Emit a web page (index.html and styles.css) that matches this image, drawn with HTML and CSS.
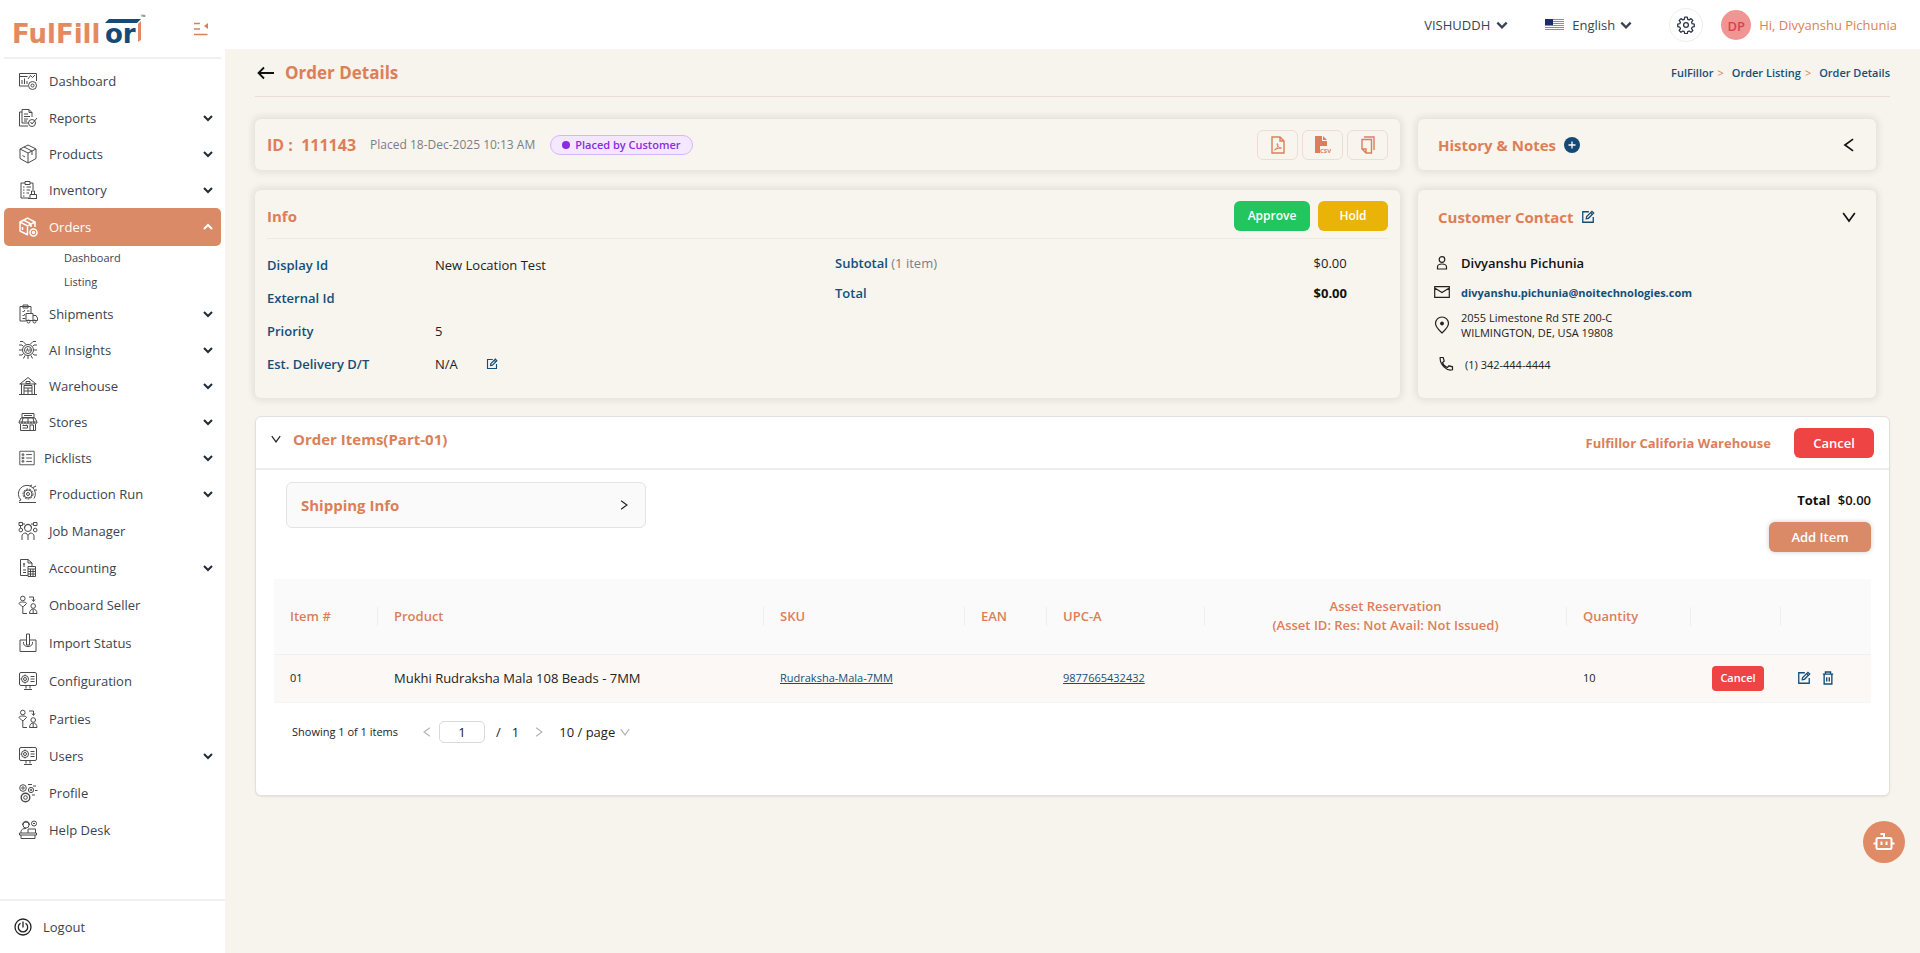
FILE: index.html
```html
<!DOCTYPE html>
<html lang="en">
<head>
<meta charset="utf-8">
<title>Order Details - FulFillor</title>
<link rel="stylesheet" href="styles.css">
</head>
<body>
<svg class="sprite" aria-hidden="true">
  <symbol id="chev" viewBox="0 0 12 12"><path d="M2 4l4 4 4-4" fill="none" stroke="currentColor" stroke-width="2"/></symbol>
  <symbol id="chev-thin" viewBox="0 0 12 12"><path d="M1 2.500l5 7 5-7" fill="none" stroke="currentColor" stroke-width="1.400"/></symbol>
  <symbol id="edit" viewBox="0 0 16 16"><g fill="none" stroke="currentColor" stroke-width="1.500"><path d="M9 2H2v12h12V8"/><path d="M6 10l.5-2.500L12.500 1.500 14.500 3.500 8.500 9.500z"/><path d="M11 3l2 2"/></g></symbol>
  <symbol id="i-dash" viewBox="0 0 20 20"><path d="M10 15H1.500V2.500h17V10M1.500 5.500h8M4 13V9M6.500 13V7.500M9 13v-3M10 8l2.500-3.500 2 2L17 4"/><circle cx="14.500" cy="14.500" r="4"/><circle cx="14.500" cy="14.500" r="1.500"/></symbol>
  <symbol id="i-report" viewBox="0 0 20 20"><path d="M4 1.500h7l3 3V9M11 1.500v3h3M4 1.500V15h6M4 4H1.500v14H10M6 6h4M6 8.500h6M6 11h4M6 13h3"/><circle cx="14" cy="15" r="3.500"/><path d="M12.500 14l1.500 2 5-6"/></symbol>
  <symbol id="i-box" viewBox="0 0 20 20"><path d="M10 1l8 4v9.500L10 19l-8-4.500V5zM2 5l8 4 8-4M10 9v10M6 3l8 4v4M4.500 11.500l2.500 1.500"/></symbol>
  <symbol id="i-inv" viewBox="0 0 20 20"><path d="M7 3H3v15h8M12 3h3v7M7 1.500h5v3H7zM5 7h1.500M8.500 7H13M5 10h1.500M8.500 10H12M5 13h1.500M8.500 13H11M5 16h1.500M12 18.500v-4h6.500v4zM13.500 14.500v-3.500h3v3.500M10 18.500h9"/></symbol>
  <symbol id="i-order" viewBox="0 0 20 20"><path d="M10 18l-8-4V5l7.500-4L17 5v5M2 5l7.500 4L17 5M9.500 9v8M5.500 3l7.500 4v3M4.500 10v3"/><circle cx="15.500" cy="15.500" r="3.500"/><circle cx="15.500" cy="15.500" r="1"/></symbol>
  <symbol id="i-ship" viewBox="0 0 20 20"><path d="M8 17H2V2.500h11V9M5 1h5v3H5zM4.500 7l1 1 1.500-2M9 7h2.500M4.500 11l1 1 1.500-2M4.500 14.500h3M8 9.500h7v7H8zM15 11.500h3l1.500 2.500v2.500H15"/><circle cx="10.500" cy="17.500" r="1.500"/><circle cx="16.500" cy="17.500" r="1.500"/></symbol>
  <symbol id="i-ai" viewBox="0 0 20 20"><circle cx="10" cy="10" r="5.500"/><circle cx="10" cy="10" r="3.500"/><path d="M8.500 11.500L9.500 8.500l1 3M12 8.500v3M1 5h3l1.500 1.500M1 10h3M1 15h3l1.500-1.500M19 5h-3l-1.500 1.500M19 10h-3M19 15h-3l-1.500-1.500M2 1.500h3l3 3M18 1.500h-3l-3 3M7 15.500l-1.500 3M13 15.500l1.500 3M10 16v3"/></symbol>
  <symbol id="i-ware" viewBox="0 0 20 20"><path d="M2 8l8-6.500L18 8M3.500 7.500V18M16.500 7.500V18M1 18.500h18M6 18V9.500h8V18M6 12h8M6 15h8M8 5.500h4v2H8zM1.500 8h17M10 12v6"/></symbol>
  <symbol id="i-store" viewBox="0 0 20 20"><path d="M4 1.500h12v4H4zM6 3.500h8M3 6h14l2 4H1zM1 10c0 2.500 3 2.500 3 0 0 2.500 3 2.500 3 0 0 2.500 3 2.500 3 0 0 2.500 3 2.500 3 0 0 2.500 3 2.500 3 0 0 2.500 3 2.500 3 0M2.500 12v6.500h15V12M12 18.500V13h3.500v5.500M4.500 13.500h5V16h-5M5 6L4 10M10 6v4M15 6l1 4"/></symbol>
  <symbol id="i-pick" viewBox="0 0 20 20"><path d="M2 2.500h16v15H2zM4.500 5.500h2v1.500h-2zM9 6.200h6.500M4.500 9.200h2v1.500h-2zM9 10h6.500M4.500 13h2v1.500h-2zM9 13.800h6.500"/></symbol>
  <symbol id="i-prod" viewBox="0 0 20 20"><path d="M3 16a8.500 8.500 0 1 1 13-1.500M1 18.500h17M12 2l2-1M15 3.500L18 2M17 6h2M3 16l-2 1"/><circle cx="10" cy="10" r="5" stroke-dasharray="2 1"/><circle cx="10" cy="10" r="4"/><circle cx="10" cy="10" r="1.500"/></symbol>
  <symbol id="i-job" viewBox="0 0 20 20"><circle cx="10" cy="7" r="3.500"/><path d="M4 19v-4c0-2 2-3 4-3l2 2.500L12 12c2 0 4 1 4 3v4M10 14.500V19M6.500 7c0-5 7-5 7 0M1 1.500h3.500v3H1zM15.500 1.500H19v3h-3.500zM4.500 3H7M13 3h2.500M2.500 4.500V7"/><circle cx="2.800" cy="9" r="1.800"/><circle cx="17.200" cy="9" r="1.800"/></symbol>
  <symbol id="i-acc" viewBox="0 0 20 20"><path d="M10 17.500H2.500v-16H10L14 5v3M10 1.500V5h4M6 5v4M5 6h2M5 12h3M5 14.500h3M10 8.500h7.500v10H10zM10 11h7.500M12.500 11v7.500M15 11v7.500M10 13.500h7.500M10 16h7.500"/></symbol>
  <symbol id="i-party" viewBox="0 0 20 20"><circle cx="4.800" cy="3.500" r="2.300"/><path d="M1 8.500c0-2 7.500-2 7.500 0L5.500 11.500h-1.500zM4.800 11.500V18.500H9M11 2h4.500v4M14 4.500L15.500 6.500 17 4.500"/><circle cx="15.200" cy="11" r="2.300"/><path d="M11.500 18.500c0-6 7.500-6 7.500 0zM15.200 14.500v4"/></symbol>
  <symbol id="i-import" viewBox="0 0 20 20"><path d="M8 7H2v11.500h16V7h-6M8.500 12V1h3v11M5.500 9c-1 6 10 6 9 0M8.500 12h3"/></symbol>
  <symbol id="i-config" viewBox="0 0 20 20"><rect x="1.500" y="1.500" width="17" height="13" rx="1.500"/><circle cx="7" cy="8" r="3.500"/><circle cx="7" cy="8" r="1.500"/><path d="M12.500 5.500h4M12.500 8h4M12.500 10.500h4M8 14.500v3M12 14.500v3M6 18.500h8M7 3.500v1M3 8h-.5M7 11.500v1"/></symbol>
  <symbol id="i-gears" viewBox="0 0 20 20"><circle cx="5" cy="5" r="3.300"/><circle cx="5" cy="5" r="1.200"/><circle cx="13" cy="7" r="2.600"/><circle cx="13" cy="7" r=".8"/><circle cx="7.500" cy="14.500" r="4.300" stroke-width="1.400"/><circle cx="7.500" cy="14.500" r="1.800"/><path d="M10 1.500h4M15 3h3M17 7.500h2.500M14 12h3"/></symbol>
  <symbol id="i-help" viewBox="0 0 20 20"><circle cx="8" cy="5" r="3"/><path d="M4.500 5c0-5 7-5 7 0M3 13V11.500c0-2 2-3 5-3M10 13V9h7.500v4M1.500 13h17v2h-17zM3 15v3.500h14V15"/><circle cx="16" cy="3.500" r="2.500"/><path d="M15 3.500h2"/></symbol>
</svg>

<div class="app">
  <aside class="sidebar">
    <div class="brand">
      <svg class="logo" viewBox="0 0 132 34" role="img" aria-label="FulFillor">
        <text x="-2" y="31" class="logo-a">FulFill</text>
        <text x="91" y="31" class="logo-b">or</text>
        <path d="M95 7h32l-4 4H91z" fill="#144a75"/>
        <path d="M124 12l3-3v19l-3 2z" fill="#e58a60"/>
        <text x="127" y="7" class="logo-tm">™</text>
      </svg>
      <button class="bare collapse" aria-label="Collapse menu"><svg width="16" height="14" viewBox="0 0 16 14"><g fill="none" stroke="#dc7f58" stroke-width="1.500"><path d="M1 1.500h6M1 7h6M1 12.500h13.500"/></g><path d="M15 1v6l-4-3z" fill="#dc7f58"/></svg></button>
    </div>
    <nav class="nav">
      <a class="item leaf" href="#"><svg class="ic"><use href="#i-dash"/></svg><span>Dashboard</span></a>
      <a class="item" href="#"><svg class="ic"><use href="#i-report"/></svg><span>Reports</span><svg class="cv"><use href="#chev"/></svg></a>
      <a class="item" href="#"><svg class="ic"><use href="#i-box"/></svg><span>Products</span><svg class="cv"><use href="#chev"/></svg></a>
      <a class="item" href="#"><svg class="ic"><use href="#i-inv"/></svg><span>Inventory</span><svg class="cv"><use href="#chev"/></svg></a>
      <a class="item leaf active" href="#"><svg class="ic"><use href="#i-order"/></svg><span>Orders</span><svg class="cv up"><use href="#chev"/></svg></a>
      <div class="sub"><a href="#">Dashboard</a><a href="#">Listing</a></div>
      <a class="item" href="#"><svg class="ic"><use href="#i-ship"/></svg><span>Shipments</span><svg class="cv"><use href="#chev"/></svg></a>
      <a class="item" href="#"><svg class="ic"><use href="#i-ai"/></svg><span>AI Insights</span><svg class="cv"><use href="#chev"/></svg></a>
      <a class="item" href="#"><svg class="ic"><use href="#i-ware"/></svg><span>Warehouse</span><svg class="cv"><use href="#chev"/></svg></a>
      <a class="item" href="#"><svg class="ic"><use href="#i-store"/></svg><span>Stores</span><svg class="cv"><use href="#chev"/></svg></a>
      <a class="item compact" href="#"><svg class="ic"><use href="#i-pick"/></svg><span>Picklists</span><svg class="cv"><use href="#chev"/></svg></a>
      <a class="item" href="#"><svg class="ic"><use href="#i-prod"/></svg><span>Production Run</span><svg class="cv"><use href="#chev"/></svg></a>
      <a class="item leaf" href="#"><svg class="ic"><use href="#i-job"/></svg><span>Job Manager</span></a>
      <a class="item" href="#"><svg class="ic"><use href="#i-acc"/></svg><span>Accounting</span><svg class="cv"><use href="#chev"/></svg></a>
      <a class="item leaf" href="#"><svg class="ic"><use href="#i-party"/></svg><span>Onboard Seller</span></a>
      <a class="item leaf" href="#"><svg class="ic"><use href="#i-import"/></svg><span>Import Status</span></a>
      <a class="item leaf" href="#"><svg class="ic"><use href="#i-config"/></svg><span>Configuration</span></a>
      <a class="item leaf" href="#"><svg class="ic"><use href="#i-party"/></svg><span>Parties</span></a>
      <a class="item" href="#"><svg class="ic"><use href="#i-config"/></svg><span>Users</span><svg class="cv"><use href="#chev"/></svg></a>
      <a class="item leaf" href="#"><svg class="ic"><use href="#i-gears"/></svg><span>Profile</span></a>
      <a class="item" href="#"><svg class="ic"><use href="#i-help"/></svg><span>Help Desk</span></a>
    </nav>
    <a class="logout" href="#"><svg width="18" height="18" viewBox="0 0 18 18" fill="none" stroke="#222" stroke-width="1.300"><circle cx="9" cy="9" r="8"/><path d="M6.500 5.200a4.700 4.700 0 1 0 5 0M9 3.500v6"/></svg><span>Logout</span></a>
  </aside>

  <div class="page">
    <header class="topbar">
      <label class="pick tenant"><select aria-label="Tenant"><option>VISHUDDH</option></select><svg class="tcv"><use href="#chev"/></svg></label>
      <label class="pick lang">
        <svg class="flag" width="19" height="12" viewBox="0 0 19 12"><rect width="19" height="12" fill="#fff"/><path d="M0 .5h19M0 2.500h19M0 4.500h19M0 6.500h19M0 8.500h19M0 10.500h19" stroke="#e06a72"/><rect width="8" height="6" fill="#1d2a6b"/></svg>
        <select aria-label="Language"><option>English</option></select><svg class="tcv"><use href="#chev"/></svg></label>
      <button class="gear" aria-label="Settings"><svg width="18" height="18" viewBox="0 0 24 24" fill="none" stroke="#2b3447" stroke-width="1.700" stroke-linejoin="round"><circle cx="12" cy="12" r="3.200"/><path d="M10.300 1.500h3.400l.6 2.900 1.900.8 2.500-1.700 2.400 2.400-1.700 2.500.8 1.900 2.800.6v3.400l-2.800.6-.8 1.900 1.700 2.500-2.400 2.400-2.500-1.700-1.900.8-.6 2.700h-3.400l-.6-2.700-1.900-.8-2.500 1.700-2.400-2.400 1.700-2.500-.8-1.900-2.800-.6v-3.400l2.800-.6.800-1.900-1.700-2.500 2.400-2.400 2.500 1.700 1.900-.8z"/></svg></button>
      <a class="user" href="#"><span class="avatar">DP</span><span>Hi, Divyanshu Pichunia</span></a>
    </header>

    <main class="main">
      <div class="titlebar">
        <button class="bare" aria-label="Back"><svg width="18" height="14" viewBox="0 0 18 14" fill="none" stroke="#111" stroke-width="1.800"><path d="M7 1.500L1.500 7 7 12.500M1.500 7H17"/></svg></button>
        <h1>Order Details</h1>
        <nav class="crumbs"><a href="#">FulFillor</a><i>&gt;</i><a href="#">Order Listing</a><i>&gt;</i><a href="#">Order Details</a></nav>
      </div>

      <div class="grid">
        <section class="card idcard">
          <h2>ID : &nbsp;111143</h2>
          <span class="placed">Placed 18-Dec-2025 10:13 AM</span>
          <span class="badge">Placed by Customer</span>
          <div class="tools">
            <button aria-label="Download PDF"><svg width="14" height="18" viewBox="0 0 14 18" fill="none" stroke="currentColor" stroke-width="1.400"><path d="M1 1h8l4 4v12H1zM9 1v4h4"/><path d="M3.500 14c3-2 4-5 3-6.500-1.500 1 1.500 5 4 4.500-2 0-5 .5-7 2z" stroke-width="1"/></svg></button>
            <button aria-label="Download CSV"><svg width="18" height="18" viewBox="0 0 18 18"><path d="M1 0h7v5h5v5H6v7H1z" fill="currentColor"/><path d="M9 0l4 4H9z" fill="currentColor"/><text x="6" y="17" class="csv">CSV</text></svg></button>
            <button aria-label="Copy order"><svg width="14" height="18" viewBox="0 0 14 18" fill="none" stroke="currentColor" stroke-width="1.400"><path d="M1 3.500h9.500V17H5l-4-4zM1 13h4v4M3 1h10v13"/></svg></button>
          </div>
        </section>

        <section class="card history">
          <h3>History &amp; Notes</h3>
          <button class="bare" aria-label="Add note"><svg width="16" height="16" viewBox="0 0 16 16"><circle cx="8" cy="8" r="8" fill="#144a75"/><path d="M8 4.500v7M4.500 8h7" stroke="#fff" stroke-width="1.300"/></svg></button>
          <button class="bare end" aria-label="Expand history"><svg class="fold left"><use href="#chev-thin"/></svg></button>
        </section>

        <section class="card info">
          <div class="info-head"><h3>Info</h3><button class="btn ok">Approve</button><button class="btn hold">Hold</button></div>
          <div class="info-body">
            <dl class="facts">
              <dt>Display Id</dt><dd>New Location Test</dd>
              <dt>External Id</dt><dd></dd>
              <dt>Priority</dt><dd>5</dd>
              <dt>Est. Delivery D/T</dt><dd>N/A <button class="bare" aria-label="Edit delivery date"><svg width="12" height="12"><use href="#edit"/></svg></button></dd>
            </dl>
            <dl class="sums">
              <dt>Subtotal <span>(1 item)</span></dt><dd>$0.00</dd>
              <dt>Total</dt><dd class="strong">$0.00</dd>
            </dl>
          </div>
        </section>

        <section class="card contact">
          <div class="contact-head"><h3>Customer Contact</h3>
            <button class="bare" aria-label="Edit contact"><svg width="14" height="14"><use href="#edit"/></svg></button>
            <button class="bare end" aria-label="Collapse contact"><svg class="fold"><use href="#chev-thin"/></svg></button></div>
          <ul class="lines">
            <li class="who"><svg width="16" height="16" viewBox="0 0 16 16"><circle cx="8" cy="4.500" r="2.800"/><path d="M3.500 14v-2c0-4 9-4 9 0v2z"/></svg><span>Divyanshu Pichunia</span></li>
            <li class="mail"><svg width="16" height="12" viewBox="0 0 16 12"><path d="M.7.700h14.600v10.600H.7zM.7 2L8 6.500 15.300 2"/></svg><a href="#">divyanshu.pichunia@noitechnologies.com</a></li>
            <li class="addr"><svg width="16" height="18" viewBox="0 0 16 18"><path d="M8 17c-3-3-6.500-6-6.500-9.500a6.500 6.500 0 0 1 13 0C14.500 11 11 14 8 17z"/><circle cx="8" cy="7.500" r="1.300" fill="#222"/></svg><span>2055 Limestone Rd STE 200-C<br>WILMINGTON, DE, USA 19808</span></li>
            <li class="tel"><svg width="16" height="16" viewBox="0 0 16 16"><path d="M2.200 1.500h3l1 3.500-1.700 1.600c.8 2.300 2.600 4.100 4.900 4.900L11 9.800l3.500 1v3c-5 2-13-5-12.300-12.300z"/></svg><span>(1) 342-444-4444</span></li>
          </ul>
        </section>
      </div>

      <section class="items">
        <div class="items-head">
          <div class="items-title">
            <button class="bare" aria-label="Collapse items"><svg class="small"><use href="#chev-thin"/></svg></button>
            <h3>Order Items(Part-01)</h3>
          </div>
          <span class="ware">Fulfillor Califoria Warehouse</span>
          <button class="btn no wide">Cancel</button>
        </div>
        <div class="items-body">
          <div class="upper">
            <button class="shipping"><span>Shipping Info</span><svg class="small right"><use href="#chev-thin"/></svg></button>
            <div class="totals"><p><b>Total</b> $0.00</p><button class="btn add">Add Item</button></div>
          </div>
          <table class="tbl">
            <colgroup><col class="c1"><col><col class="c3"><col class="c4"><col class="c5"><col class="c6"><col class="c7"><col class="c8"><col class="c8"></colgroup>
            <thead><tr><th><div>Item #</div></th><th><div>Product</div></th><th><div>SKU</div></th><th><div>EAN</div></th><th><div>UPC-A</div></th><th class="mid"><div><span>Asset Reservation<br>(Asset ID: Res: Not Avail: Not Issued)</span></div></th><th><div>Quantity</div></th><th><div></div></th><th></th></tr></thead>
            <tbody><tr><td>01</td><td class="name">Mukhi Rudraksha Mala 108 Beads - 7MM</td><td><a href="#">Rudraksha-Mala-7MM</a></td><td></td><td><a href="#">9877665432432</a></td><td></td><td>10</td>
              <td class="act"><button class="btn no mini">Cancel</button></td>
              <td><div class="acts"><button class="bare" aria-label="Edit item"><svg width="14" height="14"><use href="#edit"/></svg></button><button class="bare" aria-label="Delete item"><svg width="12" height="14" viewBox="0 0 14 16" fill="none" stroke="currentColor" stroke-width="1.600"><path d="M1 3.500h12M4 3.500V1h6v2.500M2.500 3.500V15h9V3.500M5.500 7v5M8.500 7v5"/></svg></button></div></td></tr></tbody>
          </table>
          <div class="pager">
            <span class="showing">Showing 1 of 1 items</span>
            <button class="bare" disabled aria-label="Previous page"><svg class="pg left"><use href="#chev-thin"/></svg></button>
            <input value="1" aria-label="Page">
            <span class="of">/</span><span>1</span>
            <button class="bare" disabled aria-label="Next page"><svg class="pg right"><use href="#chev-thin"/></svg></button>
            <label><select aria-label="Page size"><option>10 / page</option></select><svg class="pg"><use href="#chev-thin"/></svg></label>
          </div>
        </div>
      </section>
    </main>
  </div>
</div>
<button class="bot" aria-label="Open assistant"><svg width="22" height="20" viewBox="0 0 22 20" fill="none" stroke="#fff" stroke-width="2"><rect x="3.500" y="6" width="15" height="11" rx="1.500"/><path d="M11 6V2H7.500M.5 11.500h3M18.500 11.500h3M8.500 9.500v3.500M13.500 9.500v3.500"/></svg></button>
</body>
</html>
```
FILE: styles.css
```css
* { box-sizing: border-box; }
:root { --orange: #dc7f58; --fill: #da8a67; --navy: #144f7a; --bg: #f7f3ed; }
body { margin: 0; font-family: "Open Sans", "Noto Sans", sans-serif; font-size: 13px; line-height: 20px; color: #222; background: var(--bg); }
h1, h2, h3, p, dl, dd, ul { margin: 0; padding: 0; }
a { color: inherit; text-decoration: none; }
button, input, select { font: inherit; color: inherit; }
select { appearance: none; border: 0; padding: 0; background: none; }
svg { flex: none; display: block; }
h3 { font-size: 15px; font-weight: 700; color: var(--orange); }
.sprite { position: absolute; width: 0; height: 0; }
.bare { border: 0; background: none; padding: 0; display: inline-flex; }
.end { margin-left: auto; }
.app { display: flex; min-height: 100vh; }

.sidebar { width: 225px; flex: none; background: #fff; display: flex; flex-direction: column; color: #3c4350; }
.brand { height: 59px; margin: 0 4px; padding: 0 12px 0 10px; border-bottom: 2px solid #f0f0f0; display: flex; align-items: center; justify-content: space-between; }
.logo { width: 132px; height: 34px; overflow: visible; }
.logo-a, .logo-b { font: 700 26px "DejaVu Sans", sans-serif; fill: #e58a60; }
.logo-b { fill: #144a75; }
.logo-tm { font: 6px "Open Sans", sans-serif; fill: #144a75; }
.nav { padding: 3px 4px 0; flex: 1; }
.item { display: flex; align-items: center; gap: 11px; height: 36px; padding: 0 7px 0 14px; border-radius: 5px; }
.item.leaf { height: 38px; }
.item.active { background: var(--fill); color: #fff; }
.item .ic { width: 20px; height: 20px; fill: none; stroke: #4a4a4a; stroke-width: 1; }
.item.active .ic { stroke: #fff; stroke-width: 1.5; }
.item.compact { gap: 8px; }
.item.compact .ic { width: 18px; }
.cv { width: 12px; height: 12px; margin-left: auto; color: #222a3a; }
.cv.up { transform: rotate(180deg); color: #fff; }
.sub { padding: 0 0 2px 60px; font-size: 11px; }
.sub a { display: block; line-height: 24px; }
.logout { display: flex; align-items: center; gap: 11px; padding: 16px 14px; border-top: 2px solid #f0f0f0; }

.page { flex: 1; min-width: 0; }
.topbar { height: 49px; background: #fff; display: flex; align-items: center; justify-content: flex-end; padding: 0 23px; color: #3c4350; }
.pick { display: flex; align-items: center; gap: 4px; }
.tenant { margin-right: 36px; }
.lang { margin-right: 36px; }
.flag { margin-right: 4px; }
.tcv { width: 14px; height: 14px; }
.gear { width: 34px; height: 34px; border-radius: 50%; border: 1px solid #eee; background: #fff; display: grid; place-items: center; padding: 0; margin-right: 18px; }
.user { display: flex; align-items: center; gap: 8px; color: var(--orange); }
.avatar { width: 30px; height: 30px; border-radius: 50%; background: #f09494; color: #d9414d; text-align: center; line-height: 32px; font-weight: 600; }

.main { padding: 0 30px 40px; }
.titlebar { height: 48px; border-bottom: 1px solid #eadcd6; display: flex; align-items: center; gap: 10px; padding-left: 2px; }
.titlebar h1 { font-size: 17px; line-height: 24px; font-weight: 700; color: var(--orange); }
.crumbs { margin-left: auto; font-size: 11px; font-weight: 600; color: var(--navy); display: flex; }
.crumbs i { font-style: normal; color: var(--orange); font-weight: 400; margin: 0 8px 0 4px; }

.grid { display: grid; grid-template-columns: 5fr 2fr; gap: 20px 18px; padding: 22px 14px 18px 0; }
.card { border-radius: 6px; box-shadow: 0 0 6px 3px rgba(60, 50, 70, .09); background: #f8f4ee; padding: 0 12px; }
.idcard, .history { height: 51px; display: flex; align-items: center; }
.idcard h2 { font-size: 16px; font-weight: 700; color: var(--orange); }
.placed { margin-left: 14px; font-size: 12px; color: #7b7f86; }
.badge { margin-left: 15px; display: flex; align-items: center; gap: 5px; border: 1px solid #d8b4fe; background: #f3e8ff; color: #8b2be2; border-radius: 10px; height: 20px; padding: 0 11px; font-size: 11px; font-weight: 600; }
.badge::before { content: ""; width: 8px; height: 8px; border-radius: 50%; background: #8b2be2; }
.tools { margin-left: auto; display: flex; gap: 4px; }
.tools button { width: 41px; height: 30px; border: 1px solid #f0dcd4; border-radius: 6px; background: none; display: grid; place-items: center; color: var(--orange); padding: 0; }
.csv { font: 700 6px "Open Sans", sans-serif; fill: currentColor; }
.history, .contact { padding: 0 20px; }
.history .bare, .contact .bare { margin-left: 8px; color: var(--navy); }
.history .end, .contact .end { margin-left: auto; color: #111; }
.fold { width: 14px; height: 14px; }
.left { transform: rotate(90deg); }
.right { transform: rotate(-90deg); }

.btn { border: 0; border-radius: 6px; color: #fff; height: 30px; padding: 0; font-weight: 600; }
.ok, .hold { font-size: 12px; }
.ok { background: #22c55e; width: 76px; }
.hold { background: #eab308; width: 70px; }
.no { background: #ef4444; }
.wide { width: 80px; }
.info { padding-bottom: 18px; }
.info-head { display: flex; align-items: center; gap: 8px; height: 49px; padding-top: 4px; border-bottom: 1px solid #efe9e3; }
.info-head h3 { margin-right: auto; }
.info-body { display: grid; grid-template-columns: 568px 1fr; padding-top: 9px; }
.facts { display: grid; grid-template-columns: 168px 1fr; grid-auto-rows: 33px; align-items: center; }
.facts dd { display: flex; align-items: center; }
.facts dd .bare { margin-left: 28px; color: var(--navy); }
dt { font-weight: 600; color: var(--navy); }
dt span { font-weight: 400; color: #7b7f86; }
.sums { display: grid; grid-template-columns: 1fr auto; grid-auto-rows: 30px; align-items: center; padding-right: 41px; }
.strong { font-weight: 700; color: #111; }
.contact-head { display: flex; align-items: center; height: 54px; }
.lines { list-style: none; font-size: 11px; line-height: 15px; padding-top: 4px; }
.lines li { display: flex; align-items: center; gap: 11px; margin-left: -4px; }
.lines svg { fill: none; stroke: #222; stroke-width: 1.2; }
.who { font-size: 13px; font-weight: 600; color: #111; height: 30px; }
.mail { height: 28px; }
.mail a { font-weight: 700; color: var(--navy); }
.addr { height: 38px; }
.lines .tel { height: 40px; margin-left: 0; }

.items { background: #fff; border: 1px solid #e2e0dd; border-radius: 6px; box-shadow: 0 1px 2px rgba(0, 0, 0, .08); }
.items-head { height: 53px; border-bottom: 2px solid #ececec; display: flex; align-items: center; padding: 0 15px; gap: 12px; }
.items-title { display: flex; align-items: center; gap: 12px; padding-bottom: 8px; }
.small { width: 10px; height: 10px; color: #222; }
.ware { margin-left: auto; margin-right: 11px; font-weight: 700; color: var(--orange); }
.items-body { padding: 12px 18px 52px; }
.upper { display: flex; justify-content: space-between; align-items: flex-start; height: 97px; padding-left: 12px; }
.shipping { width: 360px; height: 46px; border: 1px solid #e3e3e3; border-radius: 6px; background: #fafafa; display: flex; align-items: center; justify-content: space-between; padding: 0 16px 0 14px; font-size: 15px; font-weight: 700; color: var(--orange); }
.totals { display: flex; flex-direction: column; align-items: flex-end; gap: 12px; padding-top: 8px; font-weight: 600; color: #111; }
.totals b { font-weight: 700; margin-right: 4px; }
.add { background: var(--fill); width: 102px; box-shadow: 0 0 5px rgba(0, 0, 0, .2); }
.tbl { width: 100%; table-layout: fixed; border-collapse: collapse; font-size: 11px; }
.c1 { width: 104px; } .c3 { width: 201px; } .c4 { width: 82px; } .c5 { width: 158px; } .c6 { width: 362px; } .c7 { width: 124px; } .c8 { width: 90px; }
th { height: 75px; background: #fafafa; padding: 0; text-align: left; font-weight: 600; font-size: 13px; line-height: 19px; color: var(--orange); border-bottom: 1px solid #f0f0f0; }
th div { min-height: 19px; padding-left: 16px; border-right: 1px solid #eee; }
th.mid div { padding: 0; height: 19px; display: flex; align-items: center; justify-content: center; text-align: center; }
td { height: 48px; padding: 0 0 0 16px; background: #fcf8f5; border-bottom: 1px solid #f5f5f5; }
td.name { font-size: 13px; }
td a { color: var(--navy); text-decoration: underline; }
td.act { padding-left: 21px; }
.mini { height: 25px; width: 52px; border-radius: 4px; font-size: 11px; }
.acts { display: flex; gap: 11px; align-items: center; color: var(--navy); }
.pager { display: flex; align-items: center; padding: 18px 0 0 18px; }
.showing { font-size: 11px; margin-right: 24px; }
.pager input { width: 46px; height: 22px; border: 1px solid #d9d9d9; border-radius: 5px; text-align: center; padding: 0; margin: 0 11px 0 7px; background: #fff; }
.of { margin-right: 11px; }
.pg { width: 10px; height: 10px; color: #b5b5b5; }
.pager .bare:nth-of-type(2) { margin: 0 15px; }
.pager label { display: flex; align-items: center; gap: 5px; }
.bot { position: fixed; right: 15px; bottom: 90px; width: 42px; height: 42px; border: 0; border-radius: 50%; background: #e08a66; display: grid; place-items: center; padding: 0; }
```
